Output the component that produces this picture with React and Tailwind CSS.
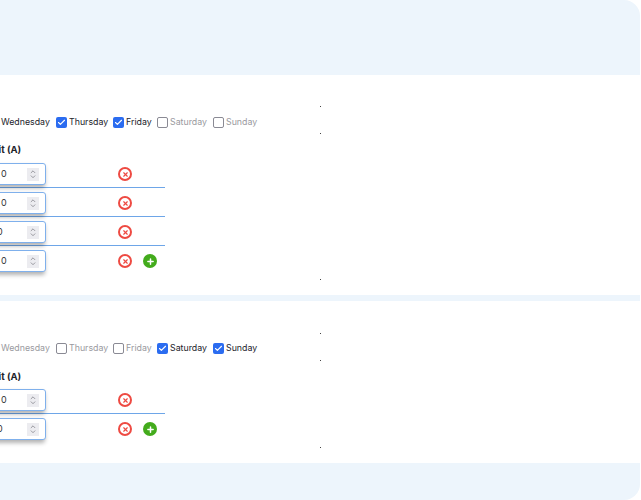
import { Check, ChevronDown, ChevronUp, Plus, X } from "lucide-react";

const days = [
  { name: "Wednesday", width: "w-[49px]", hideBox: true },
  { name: "Thursday", width: "w-[38px]" },
  { name: "Friday", width: "w-[25px]" },
  { name: "Saturday", width: "w-[37px]" },
  { name: "Sunday", width: "w-[32px]" },
];

const DayItem = ({ day, on }) => (
  <div className="flex items-center gap-[2px]">
    {!day.hideBox &&
      (on ? (
        <span className="flex h-[11px] w-[11px] items-center justify-center rounded-[2px] bg-[#2b6cf0]">
          <Check size={9} color="white" strokeWidth={3} />
        </span>
      ) : (
        <span className="h-[11px] w-[11px] rounded-[2px] border border-[#8a8a94] bg-white" />
      ))}
    <span
      className={`${day.width} mb-[2px] whitespace-nowrap text-[8.8px] leading-[13px] ${
        on ? "text-[#23232b]" : "text-[#9a9aa0]"
      }`}
    >
      {day.name}
    </span>
  </div>
);

const LimitRow = ({ shifted, last, showAdd }) => (
  <div
    className={`flex h-[29px] w-[165px] items-center pt-[2px] ${
      last ? "pb-[1px]" : "border-b border-[#6ea6e8]"
    }`}
  >
    <div
      className={`-ml-[20px] flex h-[22px] w-[66px] items-center justify-between rounded-[3px] border border-[#7fb0ec] bg-white pr-[6px] shadow-[-1px_3px_4px_rgba(0,0,0,0.3)] ${
        shifted ? "pl-[16px]" : "pl-[20px]"
      }`}
    >
      <span className="text-[9px] text-[#333]">0</span>
      <span className="flex h-[13px] w-[12px] flex-col items-center justify-center bg-[#ececf0] text-[#66666e]">
        <ChevronUp size={8} strokeWidth={2} className="-mb-[1px]" />
        <ChevronDown size={8} strokeWidth={2} className="-mt-[1px]" />
      </span>
    </div>
    <span className="ml-[72px] flex h-[14px] w-[14px] items-center justify-center rounded-full border-2 border-[#ee4a42]">
      <X size={7} color="#ee4a42" strokeWidth={4} />
    </span>
    {showAdd && (
      <span className="ml-[11px] flex h-[14px] w-[14px] items-center justify-center rounded-full bg-[#43ab1c]">
        <Plus size={9} color="white" strokeWidth={4} />
      </span>
    )}
  </div>
);

const Dot = ({ className }) => (
  <div className={`ml-[320px] h-[1px] w-[1px] bg-[#444] ${className}`} />
);

const Section = ({ active, rows, height, spacing }) => (
  <div className={`${height} bg-white ${spacing.top}`}>
    <Dot />
    <div className={`${spacing.days} flex h-[13px] items-center gap-[6px] pl-[1px]`}>
      {days.map((day) => (
        <DayItem key={day.name} day={day} on={active.includes(day.name)} />
      ))}
    </div>
    <Dot className={spacing.dot} />
    <div className="-ml-[18px] mt-[9px] h-[13px] text-[9.5px] font-bold leading-[13px] text-[#23232b]">
      Limit (A)
    </div>
    <div className={spacing.rows}>
      {rows.map((shifted, i) => (
        <LimitRow
          key={i}
          shifted={shifted}
          last={i === rows.length - 1}
          showAdd={i === rows.length - 1}
        />
      ))}
    </div>
    <Dot className="mt-[4px]" />
  </div>
);

export default function App() {
  return (
    <div className="h-[500px] w-[641px] overflow-hidden bg-white font-['Inter',sans-serif]">
      <div className="h-[500px] w-[640px] overflow-hidden rounded-r-[16px] bg-[#edf5fc]">
        <div className="h-[75px]" />
        <Section
          active={["Wednesday", "Thursday", "Friday"]}
          rows={[false, false, true, false]}
          height="h-[220px]"
          spacing={{ top: "pt-[31px]", days: "mt-[9px]", dot: "mt-[4px]", rows: "mt-[3px]" }}
        />
        <div className="h-[6px]" />
        <Section
          active={["Saturday", "Sunday"]}
          rows={[false, true]}
          height="h-[162px]"
          spacing={{ top: "pt-[32px]", days: "mt-[8px]", dot: "mt-[5px]", rows: "mt-[2px]" }}
        />
      </div>
    </div>
  );
}
